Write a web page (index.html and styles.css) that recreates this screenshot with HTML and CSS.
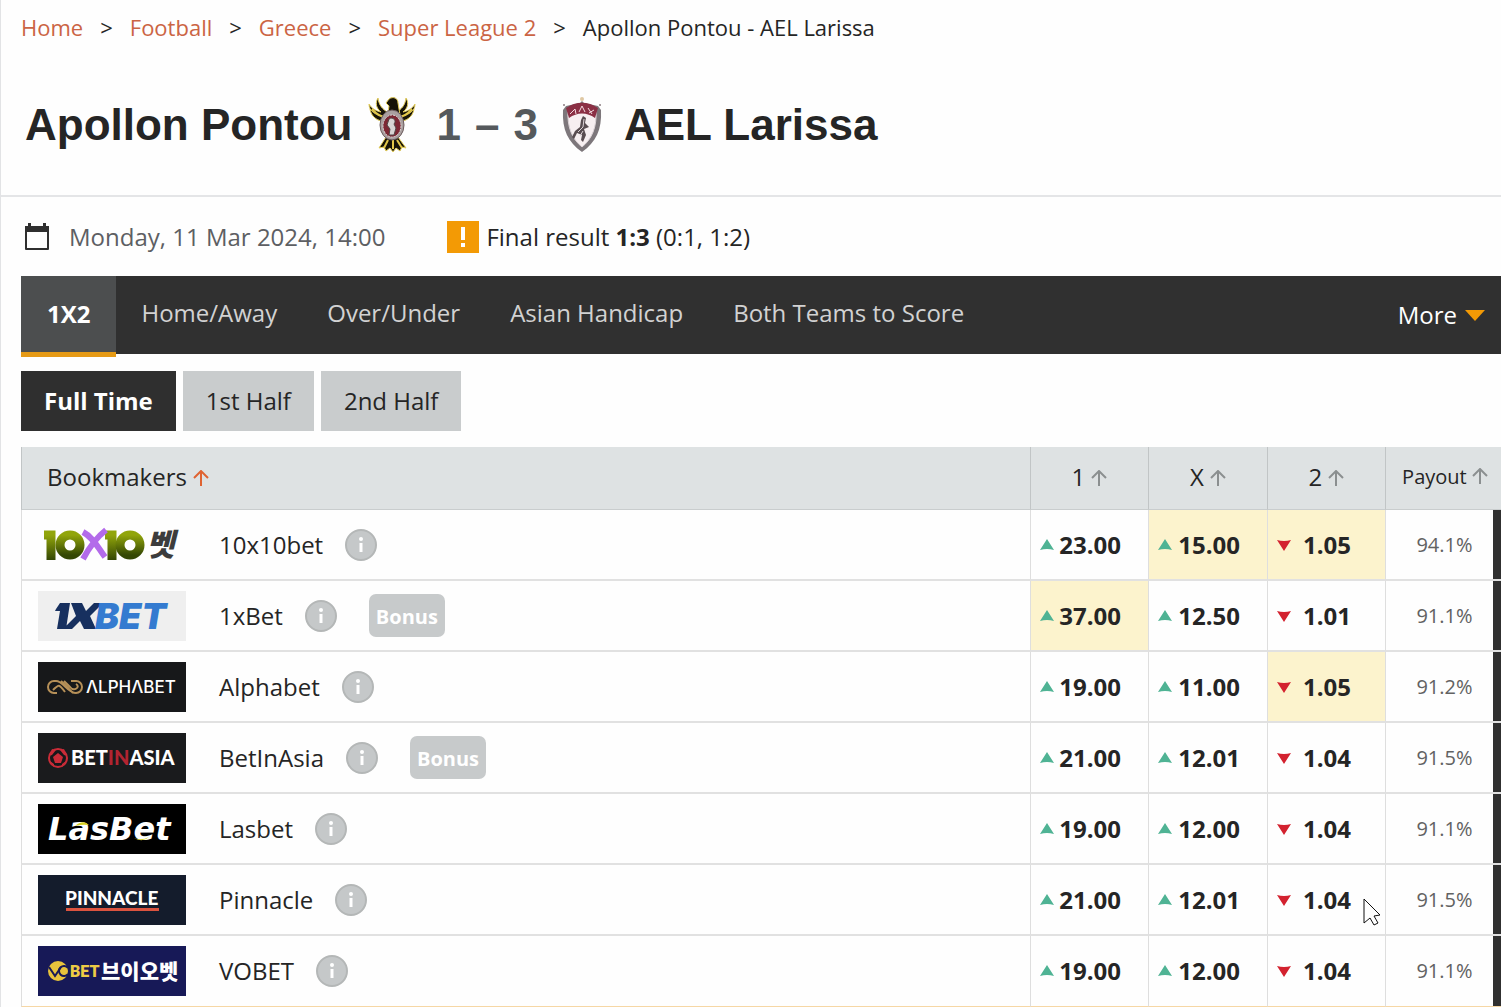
FILE: index.html
```html
<!DOCTYPE html>
<html lang="en">
<head>
  <meta charset="UTF-8">
  <meta name="viewport" content="width=device-width, initial-scale=1.0">
  <title>Apollon Pontou - AEL Larissa</title>
  <link rel="stylesheet" href="styles.css">
</head>
<body>
  <svg class="defs" aria-hidden="true">
    <symbol id="arrow-up" viewBox="0 0 16 16">
      <path d="M8 16V1M1 8l7-7 7 7" fill="none" stroke="currentColor" stroke-width="2"/>
    </symbol>
    <symbol id="odds-up" viewBox="0 0 14 12">
      <path d="M7 0l7 11q-7-2-14 0z" fill="#4fb394"/>
    </symbol>
    <symbol id="odds-down" viewBox="0 0 14 12">
      <path d="M7 12l7-11q-7 2-14 0z" fill="#d3222f"/>
    </symbol>
    <symbol id="info" viewBox="0 0 32 32">
      <circle cx="16" cy="16" r="15" fill="#c5c8c9" stroke="#b4b7b7" stroke-width="2"/>
      <path d="M16 14v9" stroke="#fff" stroke-width="3"/>
      <circle cx="16" cy="10" r="2" fill="#fff"/>
    </symbol>
  </svg>

  <main class="page">
    <nav class="breadcrumbs">
      <a href="#">Home</a><span>&gt;</span>
      <a href="#">Football</a><span>&gt;</span>
      <a href="#">Greece</a><span>&gt;</span>
      <a href="#">Super League 2</a><span>&gt;</span>
      <p>Apollon Pontou - AEL Larissa</p>
    </nav>

    <header class="match">
      <h1>Apollon Pontou</h1>
      <svg class="crest crest-home" viewBox="0 0 48 56">
        <g fill="#171308" stroke="#e6cf5a" stroke-width="1">
          <path d="M17 21C6 20 1 13 1 7c3 5 7 7 12 8C8 11 7 6 10 1c1 8 5 11 9 14z"/>
          <path d="M31 21C42 20 47 13 47 7c-3 5-7 7-12 8 5-4 6-9 3-14-1 8-5 11-9 14z"/>
          <path d="M18 24C9 25 3 19 2 12c4 5 9 7 14 7zM30 24c9 1 15-5 16-12-4 5-9 7-14 7z"/>
          <path d="M18 6l3-4c4-3 9-1 9 4l2 12-5 5h-8l2-14z"/>
          <path d="M18 40l-7 11 5-1 2 4 4-3 3 4 3-4 4 3 2-4 4 1-8-11z"/>
        </g>
        <path d="M4 12c5 6 9 8 14 8M44 12c-5 6-9 8-14 8M20 43l-4 8M25 43v9M29 43l5 8" fill="none" stroke="#e2c74b" stroke-width="2"/>
        <ellipse cx="24" cy="28" rx="12" ry="15" fill="#aaa0a0" stroke="#69595b"/>
        <ellipse cx="24" cy="29" rx="9" ry="11" fill="#7d2733" stroke="#ddd4d4" stroke-dasharray="2 1"/>
        <path d="M21 22c4-3 8 2 5 5l2 4-2 7h-5l1-6-3-4z" fill="#d8d4d3" stroke="#514444"/>
      </svg>
      <p class="score"><span>1</span><span>–</span><span>3</span></p>
      <svg class="crest crest-away" viewBox="0 0 40 56">
        <path d="M20 4l2 2 14 3 3 4c1 20-5 32-19 42C6 45 0 33 1 13l3-4 14-3z" fill="#7d777b"/>
        <path d="M20 8c6 0 10 2 14 5 1 17-4 29-14 37C10 42 5 30 6 13c4-3 8-5 14-5z" fill="#f7eff1" stroke="#ddd4d8"/>
        <path d="M4 11c10-7 22-7 32 0l-3 10c-8-6-18-6-26 0z" fill="#8b3045"/>
        <path d="M8 17l5-5 1 5M17 15l3-6 3 6M26 11l4 6M27 16l5-3" stroke="#f3d9df" stroke-width="1" fill="none"/>
        <path d="M21 19l3 2-1 5 4 4-5 2 2 6-3 7-2-2 1-5-5-2-3 6-2-2 3-6 5-4 1-7z" fill="#594d51"/>
        <path d="M22 22l-1 8-5 5M21 34l-3 5" stroke="#ded4d8" fill="none"/>
        <circle cx="20" cy="2" r="2" fill="#dfc8a3"/>
        <circle cx="2" cy="8" r="1" fill="#8b7c80"/>
        <circle cx="38" cy="8" r="1" fill="#8b7c80"/>
      </svg>
      <h1>AEL Larissa</h1>
    </header>

    <section class="content">
      <div class="match-info">
        <svg class="calendar" viewBox="0 0 26 28">
          <path d="M2 4h22v22H2z" fill="none" stroke="#2f2f2f" stroke-width="2" stroke-linejoin="round"/>
          <path d="M1 3h24v6H1zM4 0h3v4H4zM19 0h3v4h-3z" fill="#2f2f2f"/>
        </svg>
        <time datetime="2024-03-11T14:00">Monday, 11 Mar 2024, 14:00</time>
        <svg class="alert" viewBox="0 0 32 32">
          <path d="M0 0h32v32H0z" fill="#f39a05"/>
          <path d="M14 6h4v13h-4zM14 22h4v4h-4z" fill="#fff"/>
        </svg>
        <p>Final result <strong>1:3</strong> (0:1, 1:2)</p>
      </div>

      <nav class="tabs">
        <a class="active" href="#">1X2</a>
        <a href="#">Home/Away</a>
        <a href="#">Over/Under</a>
        <a href="#">Asian Handicap</a>
        <a href="#">Both Teams to Score</a>
        <button class="more" type="button">More
          <svg viewBox="0 0 20 12"><path d="M0 1h20L10 12z" fill="#f39a05"/></svg>
        </button>
      </nav>

      <div class="periods">
        <button class="active" type="button">Full Time</button>
        <button type="button">1st Half</button>
        <button type="button">2nd Half</button>
      </div>

      <table class="odds">
        <colgroup>
          <col>
          <col class="col-odd">
          <col class="col-draw">
          <col class="col-odd">
          <col class="col-payout">
          <col class="col-edge">
        </colgroup>
        <thead>
          <tr>
            <th class="sorted">Bookmakers <svg><use href="#arrow-up"/></svg></th>
            <th>1 <svg><use href="#arrow-up"/></svg></th>
            <th>X <svg><use href="#arrow-up"/></svg></th>
            <th>2 <svg><use href="#arrow-up"/></svg></th>
            <th class="payout-head" colspan="2">Payout <svg><use href="#arrow-up"/></svg></th>
          </tr>
        </thead>
        <tbody>
          <tr>
            <td>
              <div class="bookmaker">
                <svg class="logo" viewBox="0 0 148 50">
                  <defs>
                    <linearGradient id="olive" x2="0" y2="1">
                      <stop offset="0" stop-color="#91a50b"/>
                      <stop offset="1" stop-color="#344704"/>
                    </linearGradient>
                  </defs>
                  <g fill="none" stroke="url(#olive)" stroke-width="9">
                    <path d="M6 15h7v25"/>
                    <circle cx="32" cy="25" r="10"/>
                    <path d="M67 15h7v25"/>
                    <circle cx="92" cy="25" r="10"/>
                  </g>
                  <path d="M45 12c11 6 15 16 22 25M68 10C59 17 52 26 45 39" fill="none" stroke="#b36bea" stroke-width="6"/>
                  <text class="logo-kr" x="108" y="36" font-size="31" fill="#3c3c3c">벳</text>
                </svg>
                <a href="#">10x10bet</a>
                <svg class="info"><use href="#info"/></svg>
              </div>
            </td>
            <td><div class="odd"><svg><use href="#odds-up"/></svg><span>23.00</span></div></td>
            <td class="best"><div class="odd"><svg><use href="#odds-up"/></svg><span>15.00</span></div></td>
            <td class="best"><div class="odd short"><svg><use href="#odds-down"/></svg><span>1.05</span></div></td>
            <td class="payout">94.1%</td>
            <td class="edge"></td>
          </tr>
          <tr>
            <td>
              <div class="bookmaker">
                <svg class="logo" viewBox="0 0 148 50">
                  <path d="M0 0h148v50H0z" fill="#efefef"/>
                  <path d="M18 18l4-6h10l-4 26h-9l3-18h-5zM33 12h11l4 8 8-8h9L52 25l6 13H46l-4-8-8 8h-9l13-13z" fill="#17305f"/>
                  <text class="logo-heavy" x="57" y="38" font-size="36" fill="#347bd0">BET</text>
                </svg>
                <a href="#">1xBet</a>
                <svg class="info"><use href="#info"/></svg>
                <button class="bonus" type="button">Bonus</button>
              </div>
            </td>
            <td class="best"><div class="odd"><svg><use href="#odds-up"/></svg><span>37.00</span></div></td>
            <td><div class="odd"><svg><use href="#odds-up"/></svg><span>12.50</span></div></td>
            <td><div class="odd short"><svg><use href="#odds-down"/></svg><span>1.01</span></div></td>
            <td class="payout">91.1%</td>
            <td class="edge"></td>
          </tr>
          <tr>
            <td>
              <div class="bookmaker">
                <svg class="logo" viewBox="0 0 148 50">
                  <path d="M0 0h148v50H0z" fill="#17181a"/>
                  <path d="M19 31h-3a6 6 0 010-12h2c7 0 12 12 20 12a6 6 0 000-12h-5M23 19l12 12M15 28c6-6 6-6 12 2M38 22c5 3-2 8-6 3l-6-6" fill="none" stroke="#b69058" stroke-width="2"/>
                  <text class="logo-sans" x="48" y="31" font-size="17" fill="#fff">ΛLPHΛBET</text>
                </svg>
                <a href="#">Alphabet</a>
                <svg class="info"><use href="#info"/></svg>
              </div>
            </td>
            <td><div class="odd"><svg><use href="#odds-up"/></svg><span>19.00</span></div></td>
            <td><div class="odd"><svg><use href="#odds-up"/></svg><span>11.00</span></div></td>
            <td class="best"><div class="odd short"><svg><use href="#odds-down"/></svg><span>1.05</span></div></td>
            <td class="payout">91.2%</td>
            <td class="edge"></td>
          </tr>
          <tr>
            <td>
              <div class="bookmaker">
                <svg class="logo" viewBox="0 0 148 50">
                  <path d="M0 0h148v50H0z" fill="#1a1b1d"/>
                  <circle cx="20" cy="25" r="9" fill="#17181a" stroke="#ca2c38" stroke-width="2"/>
                  <path d="M20 20l5 4-2 6h-6l-2-6zM14 16l4 1-4 5-3 1zM26 16l-4 1 4 5 3 1zM12 28l4 3v3zM28 28l-4 3v3z" fill="#ca2c38"/>
                  <text class="logo-lato" x="33" y="32" font-size="20" fill="#fff">BET<tspan fill="#b32431">IN</tspan>ASIA</text>
                </svg>
                <a href="#">BetInAsia</a>
                <svg class="info"><use href="#info"/></svg>
                <button class="bonus" type="button">Bonus</button>
              </div>
            </td>
            <td><div class="odd"><svg><use href="#odds-up"/></svg><span>21.00</span></div></td>
            <td><div class="odd"><svg><use href="#odds-up"/></svg><span>12.01</span></div></td>
            <td><div class="odd short"><svg><use href="#odds-down"/></svg><span>1.04</span></div></td>
            <td class="payout">91.5%</td>
            <td class="edge"></td>
          </tr>
          <tr>
            <td>
              <div class="bookmaker">
                <svg class="logo" viewBox="0 0 148 50">
                  <path d="M0 0h148v50H0z" fill="#000"/>
                  <text class="logo-wide" x="10" y="36" font-size="32" fill="#fff">LasBet</text>
                  <path d="M37 22q8-7 14-1-7-1-14 1zM96 34q8 3 15-1-6 6-15 1z" fill="#d5cf20"/>
                </svg>
                <a href="#">Lasbet</a>
                <svg class="info"><use href="#info"/></svg>
              </div>
            </td>
            <td><div class="odd"><svg><use href="#odds-up"/></svg><span>19.00</span></div></td>
            <td><div class="odd"><svg><use href="#odds-up"/></svg><span>12.00</span></div></td>
            <td><div class="odd short"><svg><use href="#odds-down"/></svg><span>1.04</span></div></td>
            <td class="payout">91.1%</td>
            <td class="edge"></td>
          </tr>
          <tr>
            <td>
              <div class="bookmaker">
                <svg class="logo" viewBox="0 0 148 50">
                  <path d="M0 0h148v50H0z" fill="#141c2c"/>
                  <text class="logo-lato" x="27" y="30" font-size="19" fill="#fff">PINNACLE</text>
                  <path d="M28 33h93v3H28z" fill="#db533f"/>
                </svg>
                <a href="#">Pinnacle</a>
                <svg class="info"><use href="#info"/></svg>
              </div>
            </td>
            <td><div class="odd"><svg><use href="#odds-up"/></svg><span>21.00</span></div></td>
            <td><div class="odd"><svg><use href="#odds-up"/></svg><span>12.01</span></div></td>
            <td class="hovered">
              <div class="odd short"><svg><use href="#odds-down"/></svg><span>1.04</span></div>
              <svg class="cursor" viewBox="0 0 18 28">
                <path d="M1 1v24l6-5 4 7 4-2-4-7 6-1z" fill="#fff" stroke="#111" stroke-width="1"/>
              </svg>
            </td>
            <td class="payout">91.5%</td>
            <td class="edge"></td>
          </tr>
          <tr>
            <td>
              <div class="bookmaker">
                <svg class="logo" viewBox="0 0 148 50">
                  <path d="M0 0h148v50H0z" fill="#171957"/>
                  <circle cx="20" cy="25" r="10" fill="#e8c33c"/>
                  <path d="M11 21l6 9 6-9" fill="none" stroke="#171957" stroke-width="2"/>
                  <path d="M30 22a5 5 0 100 6" fill="none" stroke="#171957" stroke-width="2"/>
                  <text class="logo-condensed" x="32" y="31" font-size="16" fill="#edcb45">BET</text>
                  <text class="logo-kr upright" x="63" y="33" font-size="21" fill="#fff">브이오벳</text>
                </svg>
                <a href="#">VOBET</a>
                <svg class="info"><use href="#info"/></svg>
              </div>
            </td>
            <td><div class="odd"><svg><use href="#odds-up"/></svg><span>19.00</span></div></td>
            <td><div class="odd"><svg><use href="#odds-up"/></svg><span>12.00</span></div></td>
            <td><div class="odd short"><svg><use href="#odds-down"/></svg><span>1.04</span></div></td>
            <td class="payout">91.1%</td>
            <td class="edge"></td>
          </tr>
        </tbody>
      </table>
    </section>
  </main>
</body>
</html>
```
FILE: styles.css
```css
* {
  box-sizing: border-box;
}
body {
  margin: 0;
  font-family: "Open Sans", "Noto Sans", sans-serif;
  font-size: 24px;
  line-height: 32px;
  color: #252525;
  background: #fefefe;
}
h1, p {
  margin: 0;
}
a {
  color: inherit;
  text-decoration: none;
}
button {
  border: none;
  font: inherit;
  cursor: pointer;
}
.defs {
  display: none;
}
.page {
  border-left: 1px solid #e2e3e5;
}
.breadcrumbs {
  display: flex;
  gap: 17px;
  height: 54px;
  padding-left: 20px;
  align-items: center;
  font-size: 22px;
}
.breadcrumbs a {
  color: #cb6444;
}
.match {
  display: flex;
  align-items: center;
  height: 143px;
  padding-left: 24px;
  border-bottom: 2px solid #e4e5e7;
  font-family: "Liberation Sans", Arial, sans-serif;
}
.match h1, .score {
  font-size: 44px;
  line-height: 56px;
  font-weight: bold;
}
.score {
  display: flex;
  gap: 14px;
  margin-right: 24px;
  color: #55595c;
}
.crest {
  height: 56px;
}
.crest-home {
  width: 48px;
  margin: 0 20px 0 16px;
}
.crest-away {
  width: 40px;
  margin-right: 22px;
}
.content {
  padding-left: 20px;
}
.match-info {
  display: flex;
  align-items: center;
  height: 79px;
  padding-left: 3px;
}
.match-info time {
  color: #5d5f63;
}
.calendar {
  width: 26px;
  height: 28px;
  margin-right: 19px;
}
.alert {
  width: 32px;
  height: 32px;
  margin: 0 7px 0 62px;
}
.tabs {
  display: flex;
  height: 78px;
  background: #303030;
  color: #d2d2d2;
}
.tabs a {
  padding: 21px 25px 0;
}
.tabs a.active {
  height: 81px;
  padding: 22px 26px 0;
  background: #4c4e4f;
  border-bottom: 5px solid #e69a15;
  color: #fff;
  font-weight: bold;
}
.more {
  display: flex;
  align-items: center;
  gap: 8px;
  margin-left: auto;
  padding: 0 16px;
  background: none;
  color: #fff;
}
.more svg {
  width: 20px;
  height: 12px;
}
.periods {
  display: flex;
  gap: 7px;
  padding: 17px 0 16px;
}
.periods button {
  height: 60px;
  padding: 0 23px;
  background: #c9cccd;
  color: #252525;
}
.periods button.active {
  background: #2f2f2f;
  color: #fff;
  font-weight: bold;
}
.odds {
  width: 100%;
  table-layout: fixed;
  border-spacing: 0;
}
.col-odd {
  width: 118px;
}
.col-draw {
  width: 119px;
}
.col-payout {
  width: 108px;
}
.col-edge {
  width: 8px;
}
.odds th {
  height: 63px;
  padding: 0 0 2px;
  background: #dee2e3;
  border-left: 1px solid #c1c5c6;
  border-bottom: 1px solid #c9cdce;
  font-weight: normal;
}
.odds th svg {
  width: 16px;
  height: 16px;
  color: #8b8f90;
}
.odds th.sorted {
  padding-left: 25px;
  text-align: left;
}
.odds th.sorted svg {
  color: #df6332;
}
.odds th.payout-head {
  padding-left: 3px;
  font-size: 20px;
}
.odds td {
  height: 71px;
  padding: 0;
  border-left: 1px solid #dedede;
  border-bottom: 2px solid #e1e1e1;
}
.odds tr:last-child td {
  border-bottom: 1px solid #f6d7a5;
}
.odds td.best {
  background: #fcf3cd;
}
.odds td.payout {
  padding-left: 10px;
  text-align: center;
  font-size: 20px;
  color: #626262;
}
.odds td.edge {
  background: #303030;
  background-clip: padding-box;
  border-left: none;
}
.bookmaker {
  display: flex;
  align-items: center;
  padding-left: 16px;
}
.logo {
  width: 148px;
  height: 50px;
  margin-right: 33px;
}
.info {
  width: 32px;
  height: 32px;
  margin-left: 22px;
}
.bonus {
  height: 43px;
  margin-left: 32px;
  padding: 2px 7px 0;
  border-radius: 7px;
  background: #c7cacb;
  color: #fff;
  font-size: 20px;
  font-weight: bold;
}
.odd {
  display: flex;
  align-items: center;
  padding: 0 27px 0 9px;
  font-weight: bold;
}
.odd.short {
  padding-right: 34px;
}
.odd svg {
  width: 14px;
  height: 12px;
}
.odd span {
  flex: 1;
  text-align: right;
}
.hovered {
  position: relative;
}
.cursor {
  position: absolute;
  left: 95px;
  top: 33px;
  width: 18px;
  height: 28px;
}
.logo-kr {
  font-family: "Noto Sans CJK KR", sans-serif;
  font-weight: 900;
  font-style: italic;
}
.upright {
  font-style: normal;
}
.logo-heavy {
  font-family: Inter, sans-serif;
  font-weight: 900;
  font-style: italic;
}
.logo-wide {
  font-family: "DejaVu Sans", sans-serif;
  font-weight: bold;
  font-style: italic;
}
.logo-sans {
  font-family: Inter, sans-serif;
  font-weight: 500;
}
.logo-lato {
  font-family: Lato, sans-serif;
  font-weight: 900;
}
.logo-condensed {
  font-family: Roboto, sans-serif;
  font-weight: 900;
}
```
